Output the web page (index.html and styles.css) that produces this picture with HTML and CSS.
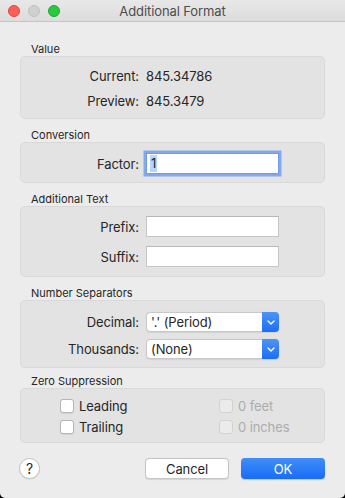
FILE: index.html
```html
<!DOCTYPE html>
<html lang="en">
<head>
    <meta charset="UTF-8">
    <meta name="viewport" content="width=device-width, initial-scale=1.0">
    <title>Additional Format</title>
    <link rel="stylesheet" href="styles.css">
</head>
<body>
    <div class="window">
        <header class="titlebar">
            <div class="lights">
                <span class="light close"></span>
                <span class="light minimize"></span>
                <span class="light zoom"></span>
            </div>
            <div class="title">Additional Format</div>
            <div></div>
        </header>

        <main class="content">
            <section class="group">
                <div class="group-label">Value</div>
                <div class="group-box value-box">
                    <div class="field-row">
                        <span class="field-label">Current:</span>
                        <span class="field-value">845.34786</span>
                    </div>
                    <div class="field-row">
                        <span class="field-label">Preview:</span>
                        <span class="field-value">845.3479</span>
                    </div>
                </div>
            </section>

            <section class="group">
                <div class="group-label">Conversion</div>
                <div class="group-box conversion-box">
                    <div class="field-row">
                        <span class="field-label">Factor:</span>
                        <div class="text-field focused"><span class="selected">1</span></div>
                    </div>
                </div>
            </section>

            <section class="group">
                <div class="group-label">Additional Text</div>
                <div class="group-box text-box">
                    <div class="field-row">
                        <span class="field-label">Prefix:</span>
                        <div class="text-field"></div>
                    </div>
                    <div class="field-row">
                        <span class="field-label">Suffix:</span>
                        <div class="text-field"></div>
                    </div>
                </div>
            </section>

            <section class="group">
                <div class="group-label">Number Separators</div>
                <div class="group-box separators-box">
                    <div class="field-row">
                        <span class="field-label">Decimal:</span>
                        <div class="popup">
                            <span class="popup-text">'.' (Period)</span>
                            <span class="popup-arrow">
                                <svg width="8" height="5" viewBox="0 0 8 5"><polyline points="1,1 4,4 7,1" fill="none" stroke="#fff" stroke-width="1.4" stroke-linecap="round" stroke-linejoin="round"/></svg>
                            </span>
                        </div>
                    </div>
                    <div class="field-row">
                        <span class="field-label">Thousands:</span>
                        <div class="popup">
                            <span class="popup-text">(None)</span>
                            <span class="popup-arrow">
                                <svg width="8" height="5" viewBox="0 0 8 5"><polyline points="1,1 4,4 7,1" fill="none" stroke="#fff" stroke-width="1.4" stroke-linecap="round" stroke-linejoin="round"/></svg>
                            </span>
                        </div>
                    </div>
                </div>
            </section>

            <section class="group last">
                <div class="group-label">Zero Suppression</div>
                <div class="group-box zero-box">
                    <label class="check"><span class="box"></span>Leading</label>
                    <label class="check disabled"><span class="box"></span>0 feet</label>
                    <label class="check"><span class="box"></span>Trailing</label>
                    <label class="check disabled"><span class="box"></span>0 inches</label>
                </div>
            </section>
        </main>

        <footer class="buttons">
            <span class="help-button">?</span>
            <div class="push-buttons">
                <span class="button cancel">Cancel</span>
                <span class="button ok">OK</span>
            </div>
        </footer>
    </div>
</body>
</html>
```

FILE: styles.css
```css
* {
    margin: 0;
    padding: 0;
    box-sizing: border-box;
}

html {
    background: #000;
}

body {
    font-family: 'Inter', 'Roboto', sans-serif;
    font-size: 13px;
    color: #262626;
    width: 345px;
    height: 498px;
    overflow: hidden;
}

.window {
    width: 345px;
    height: 498px;
    background: #ececec;
    border-radius: 0 0 5px 5px;
    display: flex;
    flex-direction: column;
}

.titlebar {
    height: 22px;
    display: grid;
    grid-template-columns: 1fr auto 1fr;
    align-items: center;
    background: linear-gradient(to bottom, #e8e8e8, #dcdcdc);
    border-bottom: 1px solid #c4c4c4;
}

.lights {
    display: flex;
    gap: 8px;
    padding-left: 8px;
}

.light {
    width: 12px;
    height: 12px;
    border-radius: 50%;
    display: block;
}

.light.close {
    background: #fc5f57;
    border: 1px solid #e0443e;
}

.light.minimize {
    background: #d0d0d0;
    border: 1px solid #c0c0c0;
}

.light.zoom {
    background: #29c940;
    border: 1px solid #1ea631;
}

.title {
    color: #4d4d4d;
    font-size: 13px;
    letter-spacing: -0.1px;
}

.content {
    padding: 20px 20px 0;
}

.group {
    margin-bottom: 9px;
}

.group.last {
    margin-top: -3px;
    margin-bottom: 0;
}

.group-label {
    font-size: 11px;
    line-height: 14px;
    height: 14px;
    padding-left: 11px;
    color: #262626;
}

.group-box {
    background: #e3e3e3;
    border: 1px solid #d9d9d9;
    border-radius: 5px;
    display: flex;
    flex-direction: column;
}

.value-box {
    height: 63px;
    padding-top: 10px;
    gap: 7px;
}

.conversion-box {
    height: 41px;
    padding-top: 10px;
}

.text-box {
    height: 71px;
    padding-top: 9px;
    gap: 9px;
}

.separators-box {
    height: 68px;
    padding-top: 11px;
    gap: 7px;
}

.field-row {
    display: grid;
    grid-template-columns: 118px 133px;
    column-gap: 7px;
    align-items: center;
    min-height: 18px;
}

.field-label {
    text-align: right;
    letter-spacing: -0.1px;
}

.field-value {
    letter-spacing: -0.1px;
}

.text-field {
    height: 21px;
    background: #fff;
    border: 1px solid #c6c6c6;
    border-top-color: #b8b8b8;
    padding-left: 3px;
    display: flex;
    align-items: center;
}

.text-field.focused {
    border-color: #6f9ce6;
    box-shadow: 0 0 0 2.5px #83a9ec;
}

.selected {
    background: #b3d7ff;
    padding: 0 1px;
    line-height: 17px;
}

.popup {
    height: 20px;
    background: #fff;
    border: 1px solid #c8c8c8;
    border-radius: 4px;
    display: flex;
    align-items: center;
    box-shadow: 0 0.5px 1px rgba(0, 0, 0, 0.08);
}

.popup-text {
    flex: 1;
    padding-left: 4px;
    letter-spacing: -0.1px;
}

.popup-arrow {
    width: 17px;
    height: 20px;
    margin: -1px -1px -1px 0;
    border-radius: 0 4px 4px 0;
    background: linear-gradient(to bottom, #4c95f8, #1c6df4);
    display: flex;
    align-items: center;
    justify-content: center;
}

.zero-box {
    height: 55px;
    padding: 6px 0 0 39px;
    display: grid;
    grid-template-columns: 159px auto;
    grid-auto-rows: 21px;
    align-items: center;
}

.check {
    display: flex;
    align-items: center;
    gap: 5px;
    letter-spacing: -0.1px;
}

.check .box {
    width: 14px;
    height: 14px;
    background: #fff;
    border: 1px solid #b6b6b6;
    border-radius: 3px;
    box-shadow: 0 0.5px 1px rgba(0, 0, 0, 0.08);
}

.check.disabled {
    color: #acacac;
}

.check.disabled .box {
    background: #ebebeb;
    border-color: #d2d2d2;
    box-shadow: none;
}

.buttons {
    display: flex;
    align-items: center;
    justify-content: space-between;
    padding: 15px 20px 0 19px;
}

.help-button {
    width: 21px;
    height: 21px;
    border-radius: 50%;
    background: #fff;
    border: 1px solid #c3c3c3;
    box-shadow: 0 0.5px 1px rgba(0, 0, 0, 0.12);
    display: flex;
    align-items: center;
    justify-content: center;
    font-size: 14px;
    color: #262626;
}

.push-buttons {
    display: flex;
    gap: 12px;
}

.button {
    width: 84px;
    height: 21px;
    border-radius: 4px;
    display: flex;
    align-items: center;
    justify-content: center;
    letter-spacing: -0.1px;
}

.button.cancel {
    background: #fff;
    border: 1px solid #c5c5c5;
    box-shadow: 0 0.5px 1px rgba(0, 0, 0, 0.1);
    color: #262626;
}

.button.ok {
    background: linear-gradient(to bottom, #3f8ef8, #196cf5);
    color: #fff;
    box-shadow: 0 0.5px 1px rgba(0, 0, 0, 0.15);
}
```
